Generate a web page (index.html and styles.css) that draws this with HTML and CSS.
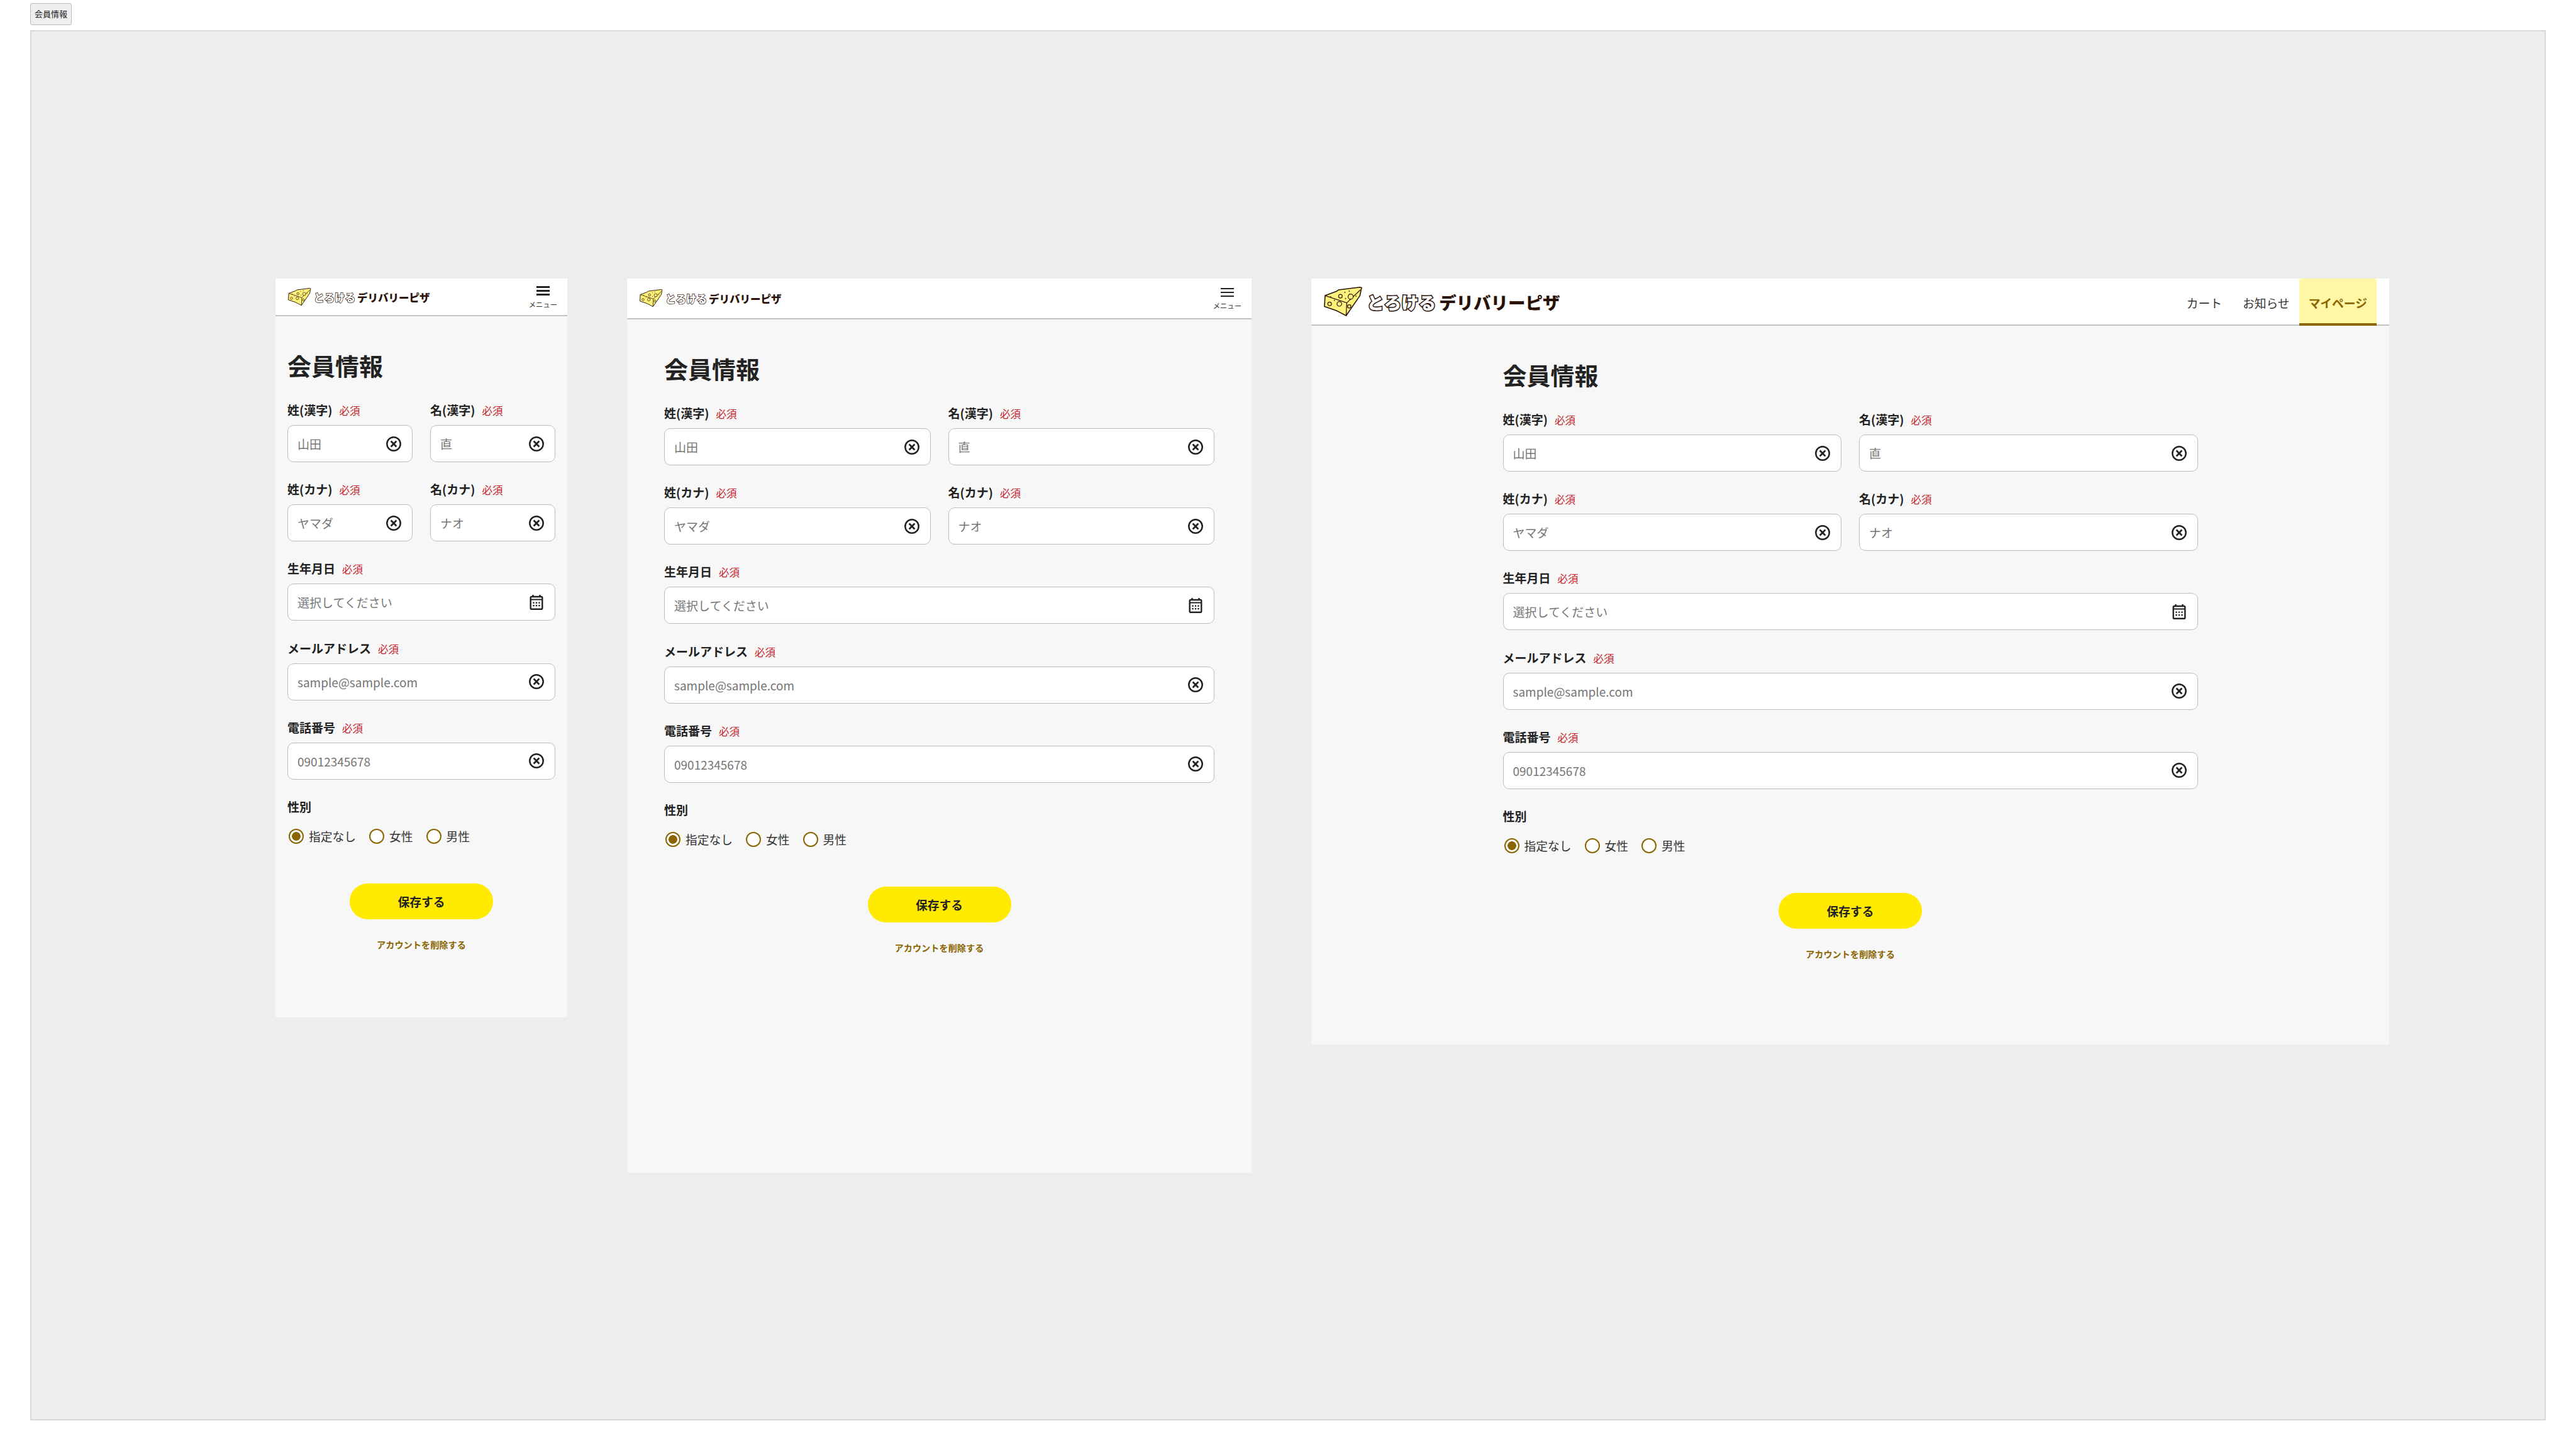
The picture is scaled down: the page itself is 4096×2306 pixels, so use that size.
FILE: index.html
```html
<!DOCTYPE html>
<html lang="ja">

<head>
    <meta charset="UTF-8">
    <title>会員情報</title>
    <link rel="stylesheet" href="styles.css">
</head>

<body>
    <svg class="icon-defs" aria-hidden="true">
        <symbol id="icon-clear" viewBox="0 0 24 24">
            <circle cx="12" cy="12" r="10.7" fill="none" stroke="#222" stroke-width="2.5" />
            <path d="M7.6 7.6 16.4 16.4M16.4 7.6 7.6 16.4" fill="none" stroke="#222" stroke-width="2.8" />
        </symbol>
        <symbol id="icon-calendar" viewBox="0 0 24 24">
            <path d="M6.5 0v4M17.5 0v4" fill="none" stroke="#222" stroke-width="2.4" />
            <rect x="2.7" y="3" width="18.6" height="19.8" rx="1.6" fill="#fff" stroke="#222" stroke-width="2.4" />
            <path d="M2.7 7.5h18.6" fill="none" stroke="#222" stroke-width="2" />
            <path d="M6.3 11.5h2.4v2.2h-2.4zM10.8 11.5h2.4v2.2h-2.4zM15.3 11.5h2.4v2.2h-2.4zM6.3 16h2.4v2.2h-2.4zM10.8 16h2.4v2.2h-2.4zM15.3 16h2.4v2.2h-2.4z" fill="#222" />
        </symbol>
        <symbol id="cheese" viewBox="0 0 62 48">
            <path d="M2 14.3 20 7.7 24 5 58.3 .8 61 1.5 60 6 58.3 14.3 36 46.7 25 41 19 38 1 32Z" fill="#fff27a" stroke="#2a1208" stroke-width="1.6" stroke-linejoin="round" />
            <path d="M2 14.3 37 26 59 5M37 26 36 46.7" fill="none" stroke="#2a1208" stroke-width="1.3" />
            <g fill="#fff27a" stroke="#2a1208" stroke-width="1.2">
                <circle cx="26.7" cy="15.3" r="3" />
                <circle cx="43.3" cy="16" r="4.2" />
                <circle cx="9.3" cy="27.7" r="3" />
                <circle cx="25" cy="27.7" r="3.8" />
                <circle cx="41" cy="31.7" r="2.7" />
            </g>
            <g fill="#2a1208">
                <circle cx="34" cy="9" r=".9" />
                <circle cx="41" cy="7" r=".9" />
                <circle cx="11" cy="16" r=".9" />
                <circle cx="35" cy="19" r=".9" />
                <circle cx="52" cy="15" r=".9" />
                <circle cx="17" cy="22" r=".9" />
            </g>
        </symbol>
    </svg>

    <div class="tab-row"><button type="button" class="page-tab">会員情報</button></div>

    <div class="canvas">

        <!-- スマホ -->
        <section class="frame frame-sp">
            <header class="site-header">
                <a class="logo logo-small">
                    <svg class="logo-mark"><use href="#cheese" /></svg>
                    <span class="logo-hira">とろける</span><span class="logo-kata">デリバリーピザ</span>
                </a>
                <div class="menu">
                    <div class="menu-bars"><span></span><span></span><span></span></div>
                    <div class="menu-label">メニュー</div>
                </div>
            </header>
            <main class="content">
                <h1>会員情報</h1>
                <form class="form-grid">
                    <div class="field">
                        <div class="field-label">姓(漢字)<span class="required">必須</span></div>
                        <div class="input-box"><span class="placeholder">山田</span><svg class="input-icon"><use href="#icon-clear" /></svg></div>
                    </div>
                    <div class="field">
                        <div class="field-label">名(漢字)<span class="required">必須</span></div>
                        <div class="input-box"><span class="placeholder">直</span><svg class="input-icon"><use href="#icon-clear" /></svg></div>
                    </div>
                    <div class="field">
                        <div class="field-label">姓(カナ)<span class="required">必須</span></div>
                        <div class="input-box"><span class="placeholder">ヤマダ</span><svg class="input-icon"><use href="#icon-clear" /></svg></div>
                    </div>
                    <div class="field">
                        <div class="field-label">名(カナ)<span class="required">必須</span></div>
                        <div class="input-box"><span class="placeholder">ナオ</span><svg class="input-icon"><use href="#icon-clear" /></svg></div>
                    </div>
                    <div class="field field-full">
                        <div class="field-label">生年月日<span class="required">必須</span></div>
                        <div class="input-box"><span class="placeholder">選択してください</span><svg class="input-icon"><use href="#icon-calendar" /></svg></div>
                    </div>
                    <div class="field field-full">
                        <div class="field-label">メールアドレス<span class="required">必須</span></div>
                        <div class="input-box"><span class="placeholder">sample@sample.com</span><svg class="input-icon"><use href="#icon-clear" /></svg></div>
                    </div>
                    <div class="field field-full">
                        <div class="field-label">電話番号<span class="required">必須</span></div>
                        <div class="input-box"><span class="placeholder">09012345678</span><svg class="input-icon"><use href="#icon-clear" /></svg></div>
                    </div>
                    <div class="field field-full">
                        <div class="field-label">性別</div>
                        <div class="radio-group">
                            <label class="radio"><span class="radio-mark checked"></span>指定なし</label>
                            <label class="radio"><span class="radio-mark"></span>女性</label>
                            <label class="radio"><span class="radio-mark"></span>男性</label>
                        </div>
                    </div>
                </form>
                <div class="actions">
                    <button type="button" class="save-button">保存する</button>
                    <a class="delete-link">アカウントを削除する</a>
                </div>
            </main>
        </section>

        <!-- タブレット -->
        <section class="frame frame-tb">
            <header class="site-header">
                <a class="logo logo-small">
                    <svg class="logo-mark"><use href="#cheese" /></svg>
                    <span class="logo-hira">とろける</span><span class="logo-kata">デリバリーピザ</span>
                </a>
                <div class="menu">
                    <div class="menu-bars"><span></span><span></span><span></span></div>
                    <div class="menu-label">メニュー</div>
                </div>
            </header>
            <main class="content">
                <h1>会員情報</h1>
                <form class="form-grid">
                    <div class="field">
                        <div class="field-label">姓(漢字)<span class="required">必須</span></div>
                        <div class="input-box"><span class="placeholder">山田</span><svg class="input-icon"><use href="#icon-clear" /></svg></div>
                    </div>
                    <div class="field">
                        <div class="field-label">名(漢字)<span class="required">必須</span></div>
                        <div class="input-box"><span class="placeholder">直</span><svg class="input-icon"><use href="#icon-clear" /></svg></div>
                    </div>
                    <div class="field">
                        <div class="field-label">姓(カナ)<span class="required">必須</span></div>
                        <div class="input-box"><span class="placeholder">ヤマダ</span><svg class="input-icon"><use href="#icon-clear" /></svg></div>
                    </div>
                    <div class="field">
                        <div class="field-label">名(カナ)<span class="required">必須</span></div>
                        <div class="input-box"><span class="placeholder">ナオ</span><svg class="input-icon"><use href="#icon-clear" /></svg></div>
                    </div>
                    <div class="field field-full">
                        <div class="field-label">生年月日<span class="required">必須</span></div>
                        <div class="input-box"><span class="placeholder">選択してください</span><svg class="input-icon"><use href="#icon-calendar" /></svg></div>
                    </div>
                    <div class="field field-full">
                        <div class="field-label">メールアドレス<span class="required">必須</span></div>
                        <div class="input-box"><span class="placeholder">sample@sample.com</span><svg class="input-icon"><use href="#icon-clear" /></svg></div>
                    </div>
                    <div class="field field-full">
                        <div class="field-label">電話番号<span class="required">必須</span></div>
                        <div class="input-box"><span class="placeholder">09012345678</span><svg class="input-icon"><use href="#icon-clear" /></svg></div>
                    </div>
                    <div class="field field-full">
                        <div class="field-label">性別</div>
                        <div class="radio-group">
                            <label class="radio"><span class="radio-mark checked"></span>指定なし</label>
                            <label class="radio"><span class="radio-mark"></span>女性</label>
                            <label class="radio"><span class="radio-mark"></span>男性</label>
                        </div>
                    </div>
                </form>
                <div class="actions">
                    <button type="button" class="save-button">保存する</button>
                    <a class="delete-link">アカウントを削除する</a>
                </div>
            </main>
        </section>

        <!-- PC -->
        <section class="frame frame-pc">
            <header class="site-header">
                <a class="logo logo-large">
                    <svg class="logo-mark"><use href="#cheese" /></svg>
                    <span class="logo-hira">とろける</span><span class="logo-kata">デリバリーピザ</span>
                </a>
                <nav class="global-nav">
                    <a class="nav-item">カート</a>
                    <a class="nav-item">お知らせ</a>
                    <a class="nav-item active">マイページ</a>
                </nav>
            </header>
            <main class="content">
                <h1>会員情報</h1>
                <form class="form-grid">
                    <div class="field">
                        <div class="field-label">姓(漢字)<span class="required">必須</span></div>
                        <div class="input-box"><span class="placeholder">山田</span><svg class="input-icon"><use href="#icon-clear" /></svg></div>
                    </div>
                    <div class="field">
                        <div class="field-label">名(漢字)<span class="required">必須</span></div>
                        <div class="input-box"><span class="placeholder">直</span><svg class="input-icon"><use href="#icon-clear" /></svg></div>
                    </div>
                    <div class="field">
                        <div class="field-label">姓(カナ)<span class="required">必須</span></div>
                        <div class="input-box"><span class="placeholder">ヤマダ</span><svg class="input-icon"><use href="#icon-clear" /></svg></div>
                    </div>
                    <div class="field">
                        <div class="field-label">名(カナ)<span class="required">必須</span></div>
                        <div class="input-box"><span class="placeholder">ナオ</span><svg class="input-icon"><use href="#icon-clear" /></svg></div>
                    </div>
                    <div class="field field-full">
                        <div class="field-label">生年月日<span class="required">必須</span></div>
                        <div class="input-box"><span class="placeholder">選択してください</span><svg class="input-icon"><use href="#icon-calendar" /></svg></div>
                    </div>
                    <div class="field field-full">
                        <div class="field-label">メールアドレス<span class="required">必須</span></div>
                        <div class="input-box"><span class="placeholder">sample@sample.com</span><svg class="input-icon"><use href="#icon-clear" /></svg></div>
                    </div>
                    <div class="field field-full">
                        <div class="field-label">電話番号<span class="required">必須</span></div>
                        <div class="input-box"><span class="placeholder">09012345678</span><svg class="input-icon"><use href="#icon-clear" /></svg></div>
                    </div>
                    <div class="field field-full">
                        <div class="field-label">性別</div>
                        <div class="radio-group">
                            <label class="radio"><span class="radio-mark checked"></span>指定なし</label>
                            <label class="radio"><span class="radio-mark"></span>女性</label>
                            <label class="radio"><span class="radio-mark"></span>男性</label>
                        </div>
                    </div>
                </form>
                <div class="actions">
                    <button type="button" class="save-button">保存する</button>
                    <a class="delete-link">アカウントを削除する</a>
                </div>
            </main>
        </section>

    </div>
</body>

</html>
```

FILE: styles.css
```css
* {
    box-sizing: border-box;
}

body {
    margin: 0;
    background: #fff;
    color: #222;
    font-family: "Noto Sans CJK JP", "Noto Sans", sans-serif;
}

.icon-defs {
    display: none;
}

.tab-row {
    height: 48px;
    padding: 5px 0 0 48px;
}

.page-tab {
    display: block;
    width: 66px;
    height: 35px;
    padding: 0 0 2px;
    background: #efefef;
    border: 1px solid #bbb;
    border-radius: 3px;
    font-family: inherit;
    font-size: 13px;
    color: #222;
}

.canvas {
    display: flex;
    align-items: flex-start;
    gap: 95px;
    width: 4000px;
    height: 2211px;
    margin-left: 48px;
    padding: 393px 0 0 388px;
    background: #ededed;
    border: 2px solid #d9d9d9;
}

/* frames */
.frame {
    flex: none;
    background: #f7f7f7;
}

.frame-sp {
    width: 464px;
    height: 1175px;
}

.frame-tb {
    width: 993px;
    height: 1422px;
}

.frame-pc {
    width: 1714px;
    height: 1218px;
}

.site-header {
    display: flex;
    justify-content: space-between;
    align-items: center;
    padding-left: 20px;
    background: #fff;
    border-bottom: 2px solid #c4c4c4;
}

.frame-sp .site-header {
    height: 60px;
    padding-right: 16px;
}

.frame-tb .site-header {
    height: 65px;
    padding-right: 16px;
}

.frame-pc .site-header {
    height: 75px;
    padding-right: 20px;
    align-items: stretch;
}

/* logo */
.logo {
    display: flex;
    align-items: center;
    font-weight: 900;
    line-height: 1;
    color: #2a1208;
    white-space: nowrap;
}

.logo-large {
    font-size: 27.5px;
}

.logo-small {
    font-size: 16.5px;
}

.logo-mark {
    flex: none;
    width: 2.22em;
    height: 1.72em;
    margin-right: 0.26em;
}

.logo-hira,
.logo-kata {
    padding-top: 0.12em;
}

.logo-hira {
    margin-right: 0.18em;
    color: #fff;
    -webkit-text-stroke: 0.11em #2a1208;
    paint-order: stroke fill;
}

.logo-small .logo-hira {
    -webkit-text-stroke-width: 0.09em;
}

/* menu */
.menu {
    padding-top: 2px;
}

.menu-bars {
    display: flex;
    flex-direction: column;
    gap: 3.5px;
    width: 21px;
    margin: 0 auto 7px;
}

.menu-bars span {
    height: 2.5px;
    background: #222;
}

.menu-label {
    font-size: 11.3px;
    line-height: 14px;
    color: #333;
}

/* nav */
.global-nav {
    display: flex;
    align-items: stretch;
}

.nav-item {
    display: flex;
    align-items: center;
    padding: 8px 15px 0;
    margin-left: 3px;
    font-size: 18.75px;
    color: #333;
    border-bottom: 4px solid transparent;
}

.nav-item.active {
    margin-left: 0;
    margin-bottom: -2px;
    padding-top: 5px;
    background: #fff6a6;
    border-bottom-color: #8a6500;
    border-radius: 4px 4px 0 0;
    color: #8a6500;
    font-weight: 700;
}

/* content */
.content {
    padding-top: 53px;
}

.frame-sp .content {
    padding-left: 19px;
    padding-right: 19px;
}

.frame-tb .content {
    padding-left: 59px;
    padding-right: 59px;
}

.frame-pc .content {
    width: 1105px;
    margin: 0 auto;
}

h1 {
    margin: 0 0 32px;
    font-size: 38px;
    line-height: 50px;
    font-weight: 700;
}

.form-grid {
    display: grid;
    grid-template-columns: 1fr 1fr;
    column-gap: 28px;
    row-gap: 29.2px;
}

.field-full {
    grid-column: 1 / -1;
}

.field-label {
    height: 28px;
    margin-bottom: 10px;
    font-size: 19px;
    line-height: 28px;
    font-weight: 700;
}

.required {
    margin-left: 11px;
    font-size: 16.5px;
    font-weight: 400;
    color: #c8232c;
}

.input-box {
    display: flex;
    justify-content: space-between;
    align-items: center;
    height: 59px;
    padding: 0 17px 0 15px;
    background: #fff;
    border: 1.5px solid #bdbdbd;
    border-radius: 10px;
}

.placeholder {
    font-size: 19px;
    color: #757575;
}

.input-icon {
    flex: none;
    width: 24px;
    height: 24px;
}

/* radio */
.radio-group {
    display: flex;
    gap: 21px;
    padding: 9.5px 0 0 2px;
}

.radio {
    display: flex;
    align-items: center;
    gap: 8px;
    font-size: 18.75px;
    line-height: 28px;
    color: #333;
}

.radio-mark {
    display: block;
    width: 24px;
    height: 24px;
    background: #fff;
    border: 2.5px solid #8a6500;
    border-radius: 50%;
}

.radio-mark.checked {
    background: radial-gradient(circle, #8a6500 0, #8a6500 6.5px, #fff 7.2px);
}

/* actions */
.actions {
    display: flex;
    flex-direction: column;
    align-items: center;
    padding-top: 61px;
}

.save-button {
    width: 228px;
    height: 57px;
    background: #ffea00;
    border: none;
    border-radius: 29px;
    font-family: inherit;
    font-size: 18.75px;
    font-weight: 700;
    color: #222;
}

.delete-link {
    margin-top: 30px;
    font-size: 14.2px;
    line-height: 20px;
    font-weight: 700;
    color: #8a6500;
}
```
